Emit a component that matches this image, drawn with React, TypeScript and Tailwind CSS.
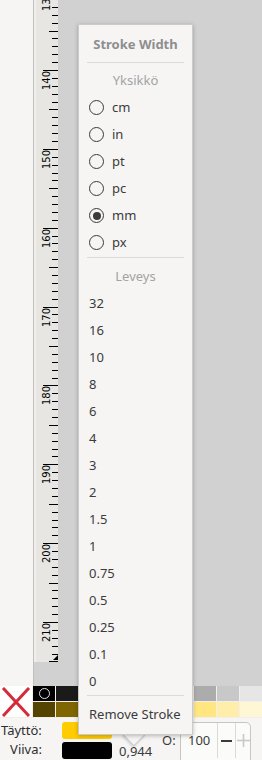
import React from "react";

const units = ["cm", "in", "pt", "pc", "mm", "px"];
const widths = ["32", "16", "10", "8", "6", "4", "3", "2", "1.5", "1", "0.75", "0.5", "0.25", "0.1", "0"];
const row1 = ["#000000", "#1a1a1a", "#333333", "#4d4d4d", "#666666", "#808080", "#999999", "#acacac", "#c8c8c8", "#e6e6e6"];
const row2 = ["#554400", "#806600", "#aa8800", "#d4aa00", "#ffcc00", "#ffd42a", "#ffdd55", "#ffe680", "#ffeeaa", "#fff6d5"];

const font = { fontFamily: '"Noto Sans", "Open Sans", sans-serif' };

// vertical ruler: 10 units = ~78.86px, 140 at y=70
const Ruler: React.FC = () => {
    const ticks = [];
    for (let v = 129; v <= 216; v++) {
        const y = 70 + (v - 140) * 7.886;
        if (y < -20 || y > 662) continue;
        const ty = Math.round(y) + 0.5;
        let x1 = 16;
        if (v % 10 === 0) x1 = 7;
        else if (v % 5 === 0) x1 = 13;
        ticks.push(<line key={"t" + v} x1={x1} y1={ty} x2={22} y2={ty} stroke="#000" strokeWidth={1}/>);
        if (v % 10 === 0) {
            const ly = Math.round(y) + 20;
            ticks.push(
                <text key={"l" + v} x={14} y={ly} transform={`rotate(-90 14 ${ly})`} fontSize={10}
                      fontFamily='"DejaVu Sans", sans-serif' fill="#000">{v}</text>
            );
        }
    }
    return (
        <svg width={22} height={662} className="block">
            {ticks}
            <polygon points="17,660 22,655 22,660" fill="#000"/>
        </svg>
    );
};

const Radio: React.FC<{ checked?: boolean }> = ({checked}) => (
    <div className="w-[15px] h-[15px] rounded-full border-[1.5px] border-[#3b3b3b] flex items-center justify-center">
        {checked && <div className="w-[8px] h-[8px] rounded-full bg-[#3b3b3b]"/>}
    </div>
);

const App: React.FC = () => {
    return (
        <div className="w-[262px] h-[760px] relative overflow-hidden bg-[#f6f5f4] text-[#3b3b3b] text-[13px]" style={font}>
            {/* top: panel, ruler, canvas */}
            <div className="h-[686px] flex flex-row">
                <div className="w-[34px] h-full bg-[#f6f5f4] border-r border-[#c2c0bc]"/>
                <div className="w-[24px] h-full bg-[#d1d1d1] flex flex-col">
                    <div className="h-[662px] pl-[2px] bg-[#f0efed]">
                        <div className="h-full bg-[#e8e6e2]">
                            <Ruler/>
                        </div>
                    </div>
                </div>
                <div className="flex-1 h-full bg-[#d1d1d1]"/>
            </div>

            {/* palette */}
            <div className="h-[32px] flex flex-row bg-[#f0efed]">
                <div className="w-[34px] h-[31px] bg-white flex items-center justify-center">
                    <svg width={30} height={30} viewBox="0 0 30 30">
                        <line x1={2} y1={1} x2={28} y2={29} stroke="#d42a3a" strokeWidth={3}/>
                        <line x1={28} y1={1} x2={2} y2={29} stroke="#d42a3a" strokeWidth={3}/>
                    </svg>
                </div>
                <div className="ml-px flex flex-col gap-px">
                    <div className="flex flex-row gap-px">
                        {row1.map((c, i) => (
                            <div key={c} className="w-[22px] h-[15px] flex items-center justify-center" style={{background: c}}>
                                {i === 0 && <div className="w-[11px] h-[11px] rounded-full border border-[#e0e0e0]"/>}
                            </div>
                        ))}
                    </div>
                    <div className="flex flex-row gap-px">
                        {row2.map((c) => (
                            <div key={c} className="w-[22px] h-[15px]" style={{background: c}}/>
                        ))}
                    </div>
                </div>
            </div>

            {/* fill / stroke bar */}
            <div className="h-[42px] flex flex-row text-[#2e2e2e]">
                <div className="w-[60px] flex flex-col pt-[3px]">
                    <div className="h-[19px] leading-[19px] pl-px">Täyttö:</div>
                    <div className="h-[19px] leading-[19px] w-[42px] text-right">Viiva:</div>
                </div>
                <div className="ml-[2px] flex flex-col gap-[3px] pt-[4px]">
                    <div className="w-[50px] h-[17px] rounded-[3px] bg-[#ffcc00]"/>
                    <div className="w-[50px] h-[17px] rounded-[3px] bg-black"/>
                </div>
                <div className="ml-[7px] pt-[24px] w-[43px] leading-[18px] text-[#3b3b3b]">0,944</div>
                <div className="pt-[13px] w-[18px] leading-[18px] text-[#3b3b3b]">O:</div>
                <div className="mt-[4px] w-[71px] h-[42px] rounded-[5px] border border-[#c8c6c2] bg-[#fbfbfa] flex flex-row">
                    <div className="w-[36px] h-[35px] pl-[7px] flex items-center text-[#3b3b3b]">100</div>
                    <div className="w-[18px] h-[35px] border-l border-[#dcdad6] flex items-center justify-center">
                        <div className="w-[11px] h-[2px] bg-[#3b3b3b]"/>
                    </div>
                    <div className="flex-1 h-[35px] border-l border-[#dcdad6] flex items-center justify-center">
                        <svg width={13} height={13} viewBox="0 0 13 13">
                            <line x1={0} y1={6.5} x2={13} y2={6.5} stroke="#c8c8c8" strokeWidth={1.6}/>
                            <line x1={6.5} y1={0} x2={6.5} y2={13} stroke="#c8c8c8" strokeWidth={1.6}/>
                        </svg>
                    </div>
                </div>
            </div>

            {/* Stroke width popover */}
            <div className="absolute left-[78px] top-[24px] w-[115px] h-[711px]">
                <div className="absolute left-[48px] -bottom-[8px] w-[16px] h-[16px] rotate-45 bg-[#f6f5f4] border border-[#c8c6c2] shadow-[0_1px_3px_rgba(0,0,0,0.2)]"/>
                <div className="relative h-full bg-[#f6f5f4] border border-[#cdcbc7] shadow-[0_1px_4px_rgba(0,0,0,0.25)] flex flex-col pt-[3px]">
                    <div className="h-[34px] flex items-center justify-center font-bold text-[#8e8e8e]">Stroke Width</div>
                    <div className="mx-2 h-px bg-[#dcdad6]"/>
                    <div className="h-[31px] pt-[4px] flex items-center justify-center text-[#a3a3a3]">Yksikkö</div>
                    {units.map((u) => (
                        <div key={u} className="h-[27px] flex flex-row items-center gap-[8px] pl-[10px]">
                            <Radio checked={u === "mm"}/>
                            <span>{u}</span>
                        </div>
                    ))}
                    <div className="mx-2 mt-px h-px bg-[#dcdad6]"/>
                    <div className="h-[32px] pt-[5px] flex items-center justify-center text-[#a3a3a3]">Leveys</div>
                    {widths.map((w) => (
                        <div key={w} className="h-[27px] flex items-center pl-[10px]">{w}</div>
                    ))}
                    <div className="mx-2 h-px bg-[#dcdad6]"/>
                    <div className="relative h-[37px] flex items-center pl-[10px] bg-[#f6f5f4]">Remove Stroke</div>
                </div>
            </div>
        </div>
    );
};

export default App;
